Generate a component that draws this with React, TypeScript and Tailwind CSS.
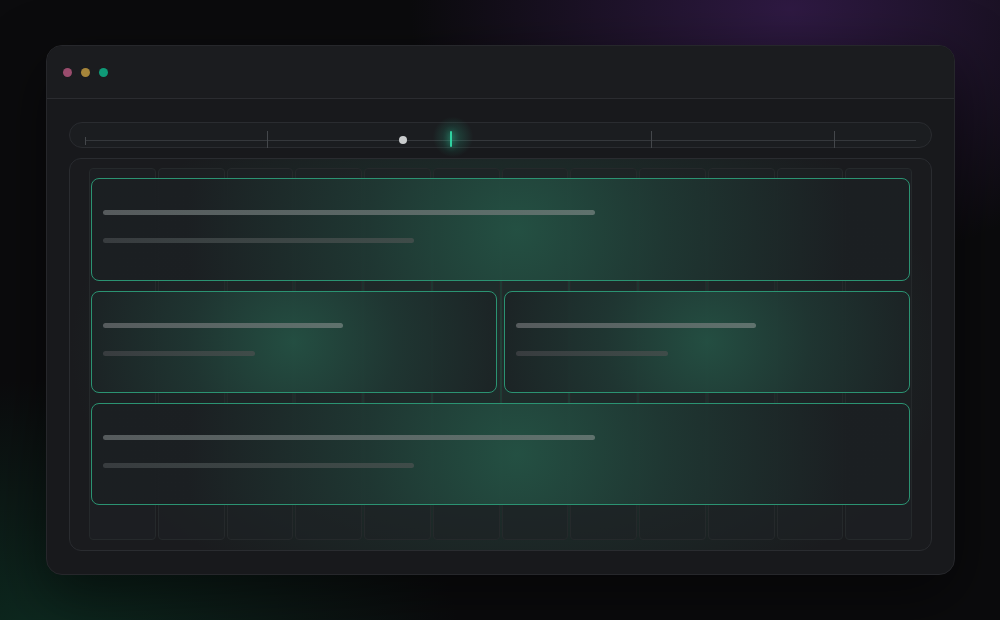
import React from "react";

const TICKS = [
  { left: 0, top: 14, h: 8 },
  { left: 182, top: 8, h: 17 },
  { left: 566, top: 8, h: 17 },
  { left: 749, top: 8, h: 17 },
];

function Card({ wide = false, className = "" }: { wide?: boolean; className?: string }) {
  const glow = wide
    ? "bg-[radial-gradient(circle_330px_at_52%_50%,rgba(36,82,68,0.95)_0%,rgba(31,56,51,0.92)_45%,rgba(27,31,34,0.95)_100%)]"
    : "bg-[radial-gradient(circle_230px_at_50%_50%,rgba(36,80,67,0.95)_0%,rgba(31,54,50,0.92)_45%,rgba(27,31,34,0.95)_100%)]";
  return (
    <div
      className={`relative h-[102px] rounded-[8px] border border-[#2b9372] ${glow} pl-[11px] pt-[31px] ${className}`}
    >
      <div className="h-[5px] w-[61%] rounded-full bg-[linear-gradient(90deg,#565b5d,#5f726d)]" />
      <div className="mt-[23px] h-[5px] w-[38.6%] rounded-full bg-[linear-gradient(90deg,#383c3f,#3f4c49)]" />
    </div>
  );
}

export default function App() {
  return (
    <div className="relative h-[620px] w-[1000px] overflow-hidden bg-[#0b0b0d] bg-[radial-gradient(ellipse_380px_260px_at_790px_10px,rgba(58,30,84,0.75),transparent),radial-gradient(ellipse_420px_260px_at_40px_640px,rgba(14,52,38,0.75),transparent)] pl-[46px] pt-[45px]">
      {/* window */}
      <div className="flex h-[530px] w-[909px] flex-col overflow-hidden rounded-[16px] border border-[#26272b] bg-[#18191c] shadow-[0_20px_60px_rgba(0,0,0,0.5)]">
        {/* title bar */}
        <div className="flex h-[53px] shrink-0 items-center gap-[9px] border-b border-[#2b2c30] bg-[#1b1c1f] pl-[16px]">
          <span className="h-[9px] w-[9px] rounded-full bg-[#9a4c6d]" />
          <span className="h-[9px] w-[9px] rounded-full bg-[#a6853a]" />
          <span className="h-[9px] w-[9px] rounded-full bg-[#0f9a77]" />
        </div>

        <div className="flex flex-1 flex-col gap-[10px] px-[22px] pb-[23px] pt-[23px]">
          {/* timeline */}
          <div className="relative h-[26px] shrink-0 rounded-[13px] border border-[#2a2c30] bg-[#1b1d20]">
            <div className="absolute left-[15px] top-[17px] h-[1px] w-[831px] bg-[#35383c]" />
            {TICKS.map((t) => (
              <div
                key={t.left}
                className="absolute w-[1px] bg-[#44474b]"
                style={{ left: 15 + t.left, top: t.top, height: t.h }}
              />
            ))}
            <div className="absolute left-[329px] top-[13px] h-[8px] w-[8px] rounded-full bg-[#c9cccd]" />
            <div className="absolute left-[361px] top-[-8px] h-[44px] w-[44px] rounded-full bg-[radial-gradient(circle,rgba(40,180,140,0.3),transparent_65%)]" />
            <div className="absolute left-[380px] top-[8px] h-[16px] w-[2px] rounded-full bg-[#2fd1a0] shadow-[0_0_6px_rgba(47,209,160,0.8)]" />
          </div>

          {/* panel */}
          <div className="flex-1 rounded-[12px] border border-[#2a2c30] bg-[#1a1b1e] bg-[radial-gradient(ellipse_440px_280px_at_440px_190px,rgba(34,80,66,0.75),transparent)] px-[19px] pb-[10px] pt-[9px]">
            <div className="relative h-full">
              <div className="absolute inset-0 grid grid-cols-12 gap-[2px]">
                {Array.from({ length: 12 }).map((_, i) => (
                  <div
                    key={i}
                    className="rounded-[4px] border border-[#25292b] bg-[#1e2224]/60"
                  />
                ))}
              </div>

              <div className="relative flex flex-col gap-[10px] px-[2px] pt-[10px]">
                <Card wide className="h-[103px]" />
                <div className="flex gap-[7px]">
                  <Card className="flex-1" />
                  <Card className="flex-1" />
                </div>
                <Card wide />
              </div>
            </div>
          </div>
        </div>
      </div>
    </div>
  );
}
